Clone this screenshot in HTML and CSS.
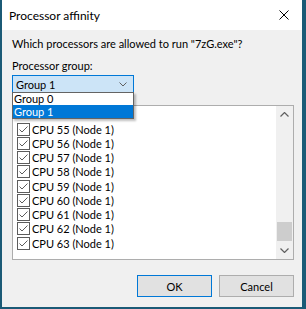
FILE: index.html
```html
<!DOCTYPE html>
<html lang="en">
<head>
  <meta charset="UTF-8">
  <title>Processor affinity</title>
  <link rel="stylesheet" href="styles.css">
</head>
<body>
  <div class="window">
    <div class="titlebar">
      <span class="title">Processor affinity</span>
      <svg class="close" width="10" height="10" viewBox="0 0 10 10">
        <path d="M0.5 0.5 L9.5 9.5 M9.5 0.5 L0.5 9.5" stroke="#000" stroke-width="1" fill="none"/>
      </svg>
    </div>

    <div class="content">
      <div class="prompt">Which processors are allowed to run "7zG.exe"?</div>
      <div class="label">Processor group:</div>

      <div class="combo">
        <div class="combo-box">
          <span>Group 1</span>
          <svg width="8" height="5" viewBox="0 0 8 5">
            <path d="M0.5 0.5 L4 4 L7.5 0.5" stroke="#606060" stroke-width="1" fill="none"/>
          </svg>
        </div>
        <div class="combo-list">
          <div class="combo-item">Group 0</div>
          <div class="combo-item selected">Group 1</div>
        </div>
      </div>

      <div class="listbox">
        <div class="rows" id="rows">
          <!-- rows added by script -->
        </div>
        <div class="scrollbar">
          <svg class="arrow" width="9" height="5" viewBox="0 0 9 5">
            <path d="M0.5 4.5 L4.5 0.5 L8.5 4.5" stroke="#606060" stroke-width="1.2" fill="none"/>
          </svg>
          <div class="track"><div class="thumb"></div></div>
          <svg class="arrow" width="9" height="5" viewBox="0 0 9 5">
            <path d="M0.5 0.5 L4.5 4.5 L8.5 0.5" stroke="#606060" stroke-width="1.2" fill="none"/>
          </svg>
        </div>
      </div>

      <div class="buttons">
        <button class="default">OK</button>
        <button>Cancel</button>
      </div>
    </div>
  </div>

  <script>
    const rows = document.getElementById("rows");
    for (let cpu = 55; cpu <= 63; cpu++) {
      rows.innerHTML += `
        <div class="row">
          <svg class="check" width="13" height="13" viewBox="0 0 13 13">
            <rect x="0.5" y="0.5" width="12" height="12" fill="#fff" stroke="#5c5c5c"/>
            <path d="M2.5 6.5 L5 9 L10.5 3.5" stroke="#5c5c5c" stroke-width="1" fill="none"/>
          </svg>
          <span>CPU ${cpu} (Node 1)</span>
        </div>
      `;
    }
  </script>
</body>
</html>
```

FILE: styles.css
```css
body {
  margin: 0;
  padding: 0 4px 2px 2px;
  background-color: #1b5a76;
  font-family: Lato, "Liberation Sans", sans-serif;
  font-size: 11px;
  color: #000;
}

.window {
  width: 300px;
  height: 307px;
  background-color: #f0f0f0;
}

.titlebar {
  height: 30px;
  background-color: #fff;
  display: flex;
  align-items: center;
  justify-content: space-between;
  padding: 0 13px 0 7px;
}

.title {
  font-size: 12px;
  margin-top: 1px;
}

.close {
  display: block;
}

.content {
  padding: 6px 8px 0 10px;
}

.prompt {
  line-height: 15px;
}

.label {
  line-height: 15px;
  margin-top: 7px;
}

.combo {
  position: relative;
  margin-top: 2px;
  width: 122px;
}

.combo-box {
  height: 16px;
  border: 1px solid #0078d7;
  background-color: #cce4f7;
  display: flex;
  align-items: center;
  justify-content: space-between;
  padding: 0 6px 0 3px;
}

.combo-list {
  position: absolute;
  top: 17px;
  left: 0;
  width: 120px;
  border: 1px solid #646464;
  background-color: #fff;
  box-shadow: 2px 2px 2px rgba(0, 0, 0, 0.25);
  z-index: 2;
}

.combo-item {
  height: 12px;
  line-height: 12px;
  padding-left: 1px;
}

.combo-item.selected {
  height: 13px;
  line-height: 13px;
  background-color: #0078d7;
  color: #fff;
}

.listbox {
  margin-top: 12px;
  height: 153px;
  border: 1px solid #adadad;
  background-color: #fff;
  display: flex;
  overflow: hidden;
}

.rows {
  flex: 1;
  padding: 16px 0 0 4px;
}

.row {
  height: 14.25px;
  display: flex;
  align-items: center;
  gap: 2px;
}

.check {
  display: block;
}

.scrollbar {
  width: 17px;
  background-color: #f0f0f0;
  display: flex;
  flex-direction: column;
  align-items: center;
}

.arrow {
  margin: 6px 0;
}

.track {
  flex: 1;
  width: 100%;
  display: flex;
  flex-direction: column;
  justify-content: flex-end;
}

.thumb {
  height: 19px;
  margin: 0 1px 1px;
  background-color: #cdcdcd;
}

.buttons {
  margin-top: 15px;
  display: flex;
  justify-content: flex-end;
  gap: 7px;
}

button {
  width: 75px;
  height: 22px;
  border: 1px solid #adadad;
  background-color: #e1e1e1;
  font-family: inherit;
  font-size: 11px;
  padding: 0;
}

button.default {
  border-color: #0078d7;
}
```
